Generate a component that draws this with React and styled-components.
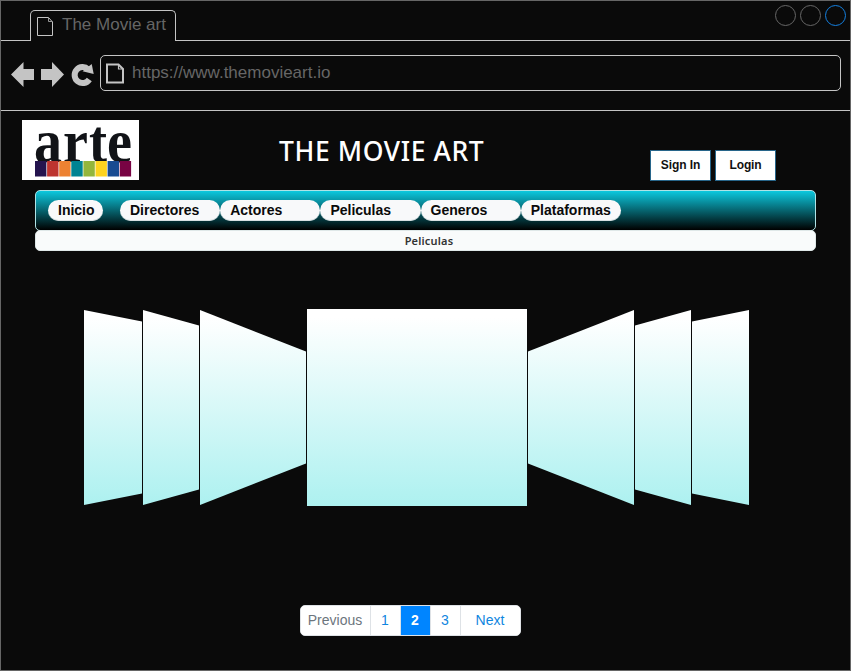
import React from "react";
import styled, { createGlobalStyle } from "styled-components";

const GlobalStyle = createGlobalStyle`
  *, *::before, *::after { box-sizing: border-box; }
  body { margin: 0; background: #0a0a0a; }
  svg { display: block; flex: none; overflow: visible; }
  button { font: inherit; margin: 0; padding: 0; cursor: pointer; }
`;

const BrowserWindow = styled.div`
  display: flex;
  flex-direction: column;
  width: 851px;
  height: 671px;
  border: 1px solid #666666;
  background: #0a0a0a;
  font-family: "Liberation Sans", Arial, sans-serif;
  overflow: hidden;
`;

const TabBar = styled.div`
  display: flex;
  align-items: flex-end;
  height: 40px;
  flex: none;
`;

const TabBarEdge = styled.div`
  width: 29px;
  border-bottom: 1px solid #c4c4c4;
`;

const Tab = styled.div`
  display: flex;
  align-items: flex-start;
  width: 146px;
  height: 31px;
  padding: 6px 0 0 6px;
  border: 1px solid #c4c4c4;
  border-bottom: 0;
  border-radius: 5px 5px 0 0;
`;

const TabTitle = styled.span`
  margin: -2px 0 0 8px;
  font-size: 17px;
  line-height: 19px;
  white-space: nowrap;
  color: #666666;
`;

const WindowControls = styled.div`
  display: flex;
  flex: 1;
  height: 40px;
  justify-content: flex-end;
  gap: 4px;
  padding: 4px 4px 0 0;
  border-bottom: 1px solid #c4c4c4;
`;

const Control = styled.span`
  width: 21px;
  height: 21px;
  border: 1px solid ${(p) => (p.$active ? "#1480e0" : "#666666")};
  border-radius: 50%;
`;

const Toolbar = styled.div`
  display: flex;
  align-items: flex-start;
  flex: none;
  height: 70px;
  padding: 14px 9px 0 10px;
  border-bottom: 1px solid #c4c4c4;
`;

const ToolIcons = styled.div`
  display: flex;
  gap: 7px;
  width: 89px;
  padding-top: 7px;
`;

const AddressBar = styled.div`
  display: flex;
  flex: 1;
  height: 36px;
  padding: 7px 0 0 5px;
  border: 1px solid #c4c4c4;
  border-radius: 5px;
`;

const Url = styled.span`
  margin-left: 7px;
  font-size: 17px;
  line-height: 19px;
  color: #666666;
`;

const Header = styled.header`
  display: flex;
  align-items: flex-start;
  flex: none;
  height: 79px;
  padding: 9px 74px 0 21px;
`;

const Title = styled.h1`
  width: 210px;
  margin: 13px auto 0 140px;
  font-family: "Comic Sans MS", "Noto Sans", sans-serif;
  font-size: 26.5px;
  font-weight: 500;
  line-height: 37px;
  letter-spacing: 0.6px;
  white-space: nowrap;
  color: #ffffff;
`;

const AuthActions = styled.div`
  display: flex;
  gap: 4px;
  padding-top: 30px;
`;

const AuthButton = styled.button`
  width: 61px;
  height: 31px;
  padding-bottom: 2px;
  border: 1px solid #27658a;
  background: #ffffff;
  && { font-size: 12px; font-weight: 700; letter-spacing: -0.1px; }
  color: #111111;
`;

const Navigation = styled.nav`
  display: flex;
  align-items: flex-start;
  flex: none;
  height: 41px;
  margin: 0 34px;
  padding: 9px 0 0 12px;
  border: 1px solid #b0e3e6;
  border-radius: 5px;
  background: linear-gradient(#0cc8de, #000000);
`;

const NavPill = styled.a`
  width: ${(p) => (p.$compact ? 55 : 100.2)}px;
  height: 21px;
  margin-right: ${(p) => (p.$compact ? 17 : 0)}px;
  padding-left: 10px;
  border: 1px solid #d8e0e2;
  border-width: 0 0 1px;
  border-radius: 11px;
  background: #f8f9fa;
  font-size: 14px;
  font-weight: 700;
  line-height: 20px;
  color: #0a0a0a;
`;

const SectionBar = styled.h2`
  flex: none;
  height: 21px;
  margin: -1px 34px 0;
  padding-left: 7px;
  border: 1px solid #dfe8e8;
  border-radius: 5px;
  background: #f9fbfb;
  text-align: center;
  font-family: "Comic Sans MS", "Noto Sans", sans-serif;
  font-size: 11px;
  font-weight: 600;
  line-height: 19px;
  letter-spacing: 0.2px;
  color: #333333;
`;

const Carousel = styled.section`
  display: flex;
  align-items: center;
  gap: 1px;
  flex: none;
  height: 197px;
  margin: 58px 0 0 83px;
`;

const Slide = styled.div`
  width: ${(p) => p.$width}px;
  height: ${(p) => (p.$featured ? 197 : 195)}px;
  background: linear-gradient(#ffffff 4%, #adf1f0);
  clip-path: ${(p) =>
    p.$side === "left"
      ? `polygon(0 0, 100% ${p.$drop}px, 100% calc(100% - ${p.$drop}px), 0 100%)`
      : p.$side === "right"
      ? `polygon(0 ${p.$drop}px, 100% 0, 100% 100%, 0 calc(100% - ${p.$drop}px))`
      : "none"};
`;

const Pagination = styled.nav`
  display: flex;
  flex: none;
  width: 221px;
  height: 31px;
  margin: 99px 0 0 299px;
  border: 1px solid #dee2e6;
  border-radius: 5px;
  background: #ffffff;
  overflow: hidden;
`;

const PageLink = styled.button`
  width: ${(p) => p.$width || 30}px;
  padding: 0 1px 1px 0;
  border: 0;
  border-right: 1px solid #dee2e6;
  background: ${(p) => (p.$active ? "#0085ff" : "#ffffff")};
  && { font-size: 14px; font-weight: ${(p) => (p.$active ? 700 : 400)}; }
  color: ${(p) => (p.$active ? "#ffffff" : p.$muted ? "#6c757d" : "#0f86e0")};
  &:last-child { border-right: 0; }
`;

function PageIcon({ heavy }) {
  return heavy ? (
    <svg width="19" height="22" viewBox="0 0 19 22" fill="none" stroke="#c4c4c4">
      <path d="M1 1.5H12.5L17 6V19.5H1Z" strokeWidth="2" />
      <path d="M12.5 2V6H17" strokeWidth="1.2" />
    </svg>
  ) : (
    <svg width="17" height="20" viewBox="0 0 17 20" fill="none" stroke="#c4c4c4">
      <path d="M.5.5H11.5L15.5 5V18.5H.5Z" />
      <path d="M11.5.5V4.5H15.5" stroke="#999999" />
    </svg>
  );
}

function Arrow({ right }) {
  return (
    <svg width="23" height="25" viewBox="0 0 23 25" fill="#c4c4c4">
      <path
        d={right ? "M0 7H11V0L23 12.5L11 25V18H0Z" : "M23 7H12.5V0L0 12.5L12.5 25V18H23Z"}
      />
    </svg>
  );
}

function Reload() {
  return (
    <svg width="23" height="25" viewBox="-1 0 23 25">
      <path d="M17.3 17.5A8 8 0 1 1 16.2 7.3" fill="none" stroke="#c4c4c4" strokeWidth="6" />
      <path d="M19.7 2L21.7 12L10.5 9.2Z" fill="#c4c4c4" />
    </svg>
  );
}

const logoColors = [
  "#24144e", "#bd342f", "#ed8232", "#008392",
  "#94b63c", "#fed31f", "#194b91", "#780343",
];

function ArteLogo() {
  return (
    <svg width="117" height="60" viewBox="0 0 117 60">
      <rect width="117" height="60" fill="#ffffff" />
      <g fill="#111317" fontFamily="'Liberation Serif', serif" fontSize="61" fontWeight="700">
        <text x="12" y="41.5" textLength="28" lengthAdjust="spacingAndGlyphs">a</text>
        <text x="41" y="41.5" textLength="25" lengthAdjust="spacingAndGlyphs">r</text>
        <text x="67" y="41.5" textLength="18" lengthAdjust="spacingAndGlyphs">t</text>
        <text x="85" y="41.5" textLength="25" lengthAdjust="spacingAndGlyphs">e</text>
      </g>
      {logoColors.map((color, i) => (
        <rect key={color} x={13 + i * 12.1} y="41" width="11.4" height="15.5" fill={color} />
      ))}
    </svg>
  );
}

const categories = ["Directores", "Actores", "Peliculas", "Generos", "Plataformas"];

const slides = [
  { width: 58, drop: 11.5, side: "left" },
  { width: 56, drop: 15.5, side: "left" },
  { width: 106, drop: 41.5, side: "left" },
  { width: 220, featured: true },
  { width: 106, drop: 41.5, side: "right" },
  { width: 56, drop: 15.5, side: "right" },
  { width: 57, drop: 11.5, side: "right" },
];

export default function App() {
  return (
    <BrowserWindow>
      <GlobalStyle />
      <TabBar>
        <TabBarEdge />
        <Tab>
          <PageIcon />
          <TabTitle>The Movie art</TabTitle>
        </Tab>
        <WindowControls>
          <Control />
          <Control />
          <Control $active />
        </WindowControls>
      </TabBar>
      <Toolbar>
        <ToolIcons>
          <Arrow />
          <Arrow right />
          <Reload />
        </ToolIcons>
        <AddressBar>
          <PageIcon heavy />
          <Url>https://www.themovieart.io</Url>
        </AddressBar>
      </Toolbar>
      <Header>
        <ArteLogo />
        <Title>THE MOVIE ART</Title>
        <AuthActions>
          <AuthButton>Sign In</AuthButton>
          <AuthButton>Login</AuthButton>
        </AuthActions>
      </Header>
      <Navigation>
        <NavPill $compact>Inicio</NavPill>
        {categories.map((name) => (
          <NavPill key={name}>{name}</NavPill>
        ))}
      </Navigation>
      <SectionBar>Peliculas</SectionBar>
      <Carousel>
        {slides.map((s, i) => (
          <Slide key={i} $width={s.width} $drop={s.drop} $side={s.side} $featured={s.featured} />
        ))}
      </Carousel>
      <Pagination>
        <PageLink $width={70} $muted>Previous</PageLink>
        <PageLink>1</PageLink>
        <PageLink $active>2</PageLink>
        <PageLink>3</PageLink>
        <PageLink $width={59}>Next</PageLink>
      </Pagination>
    </BrowserWindow>
  );
}
